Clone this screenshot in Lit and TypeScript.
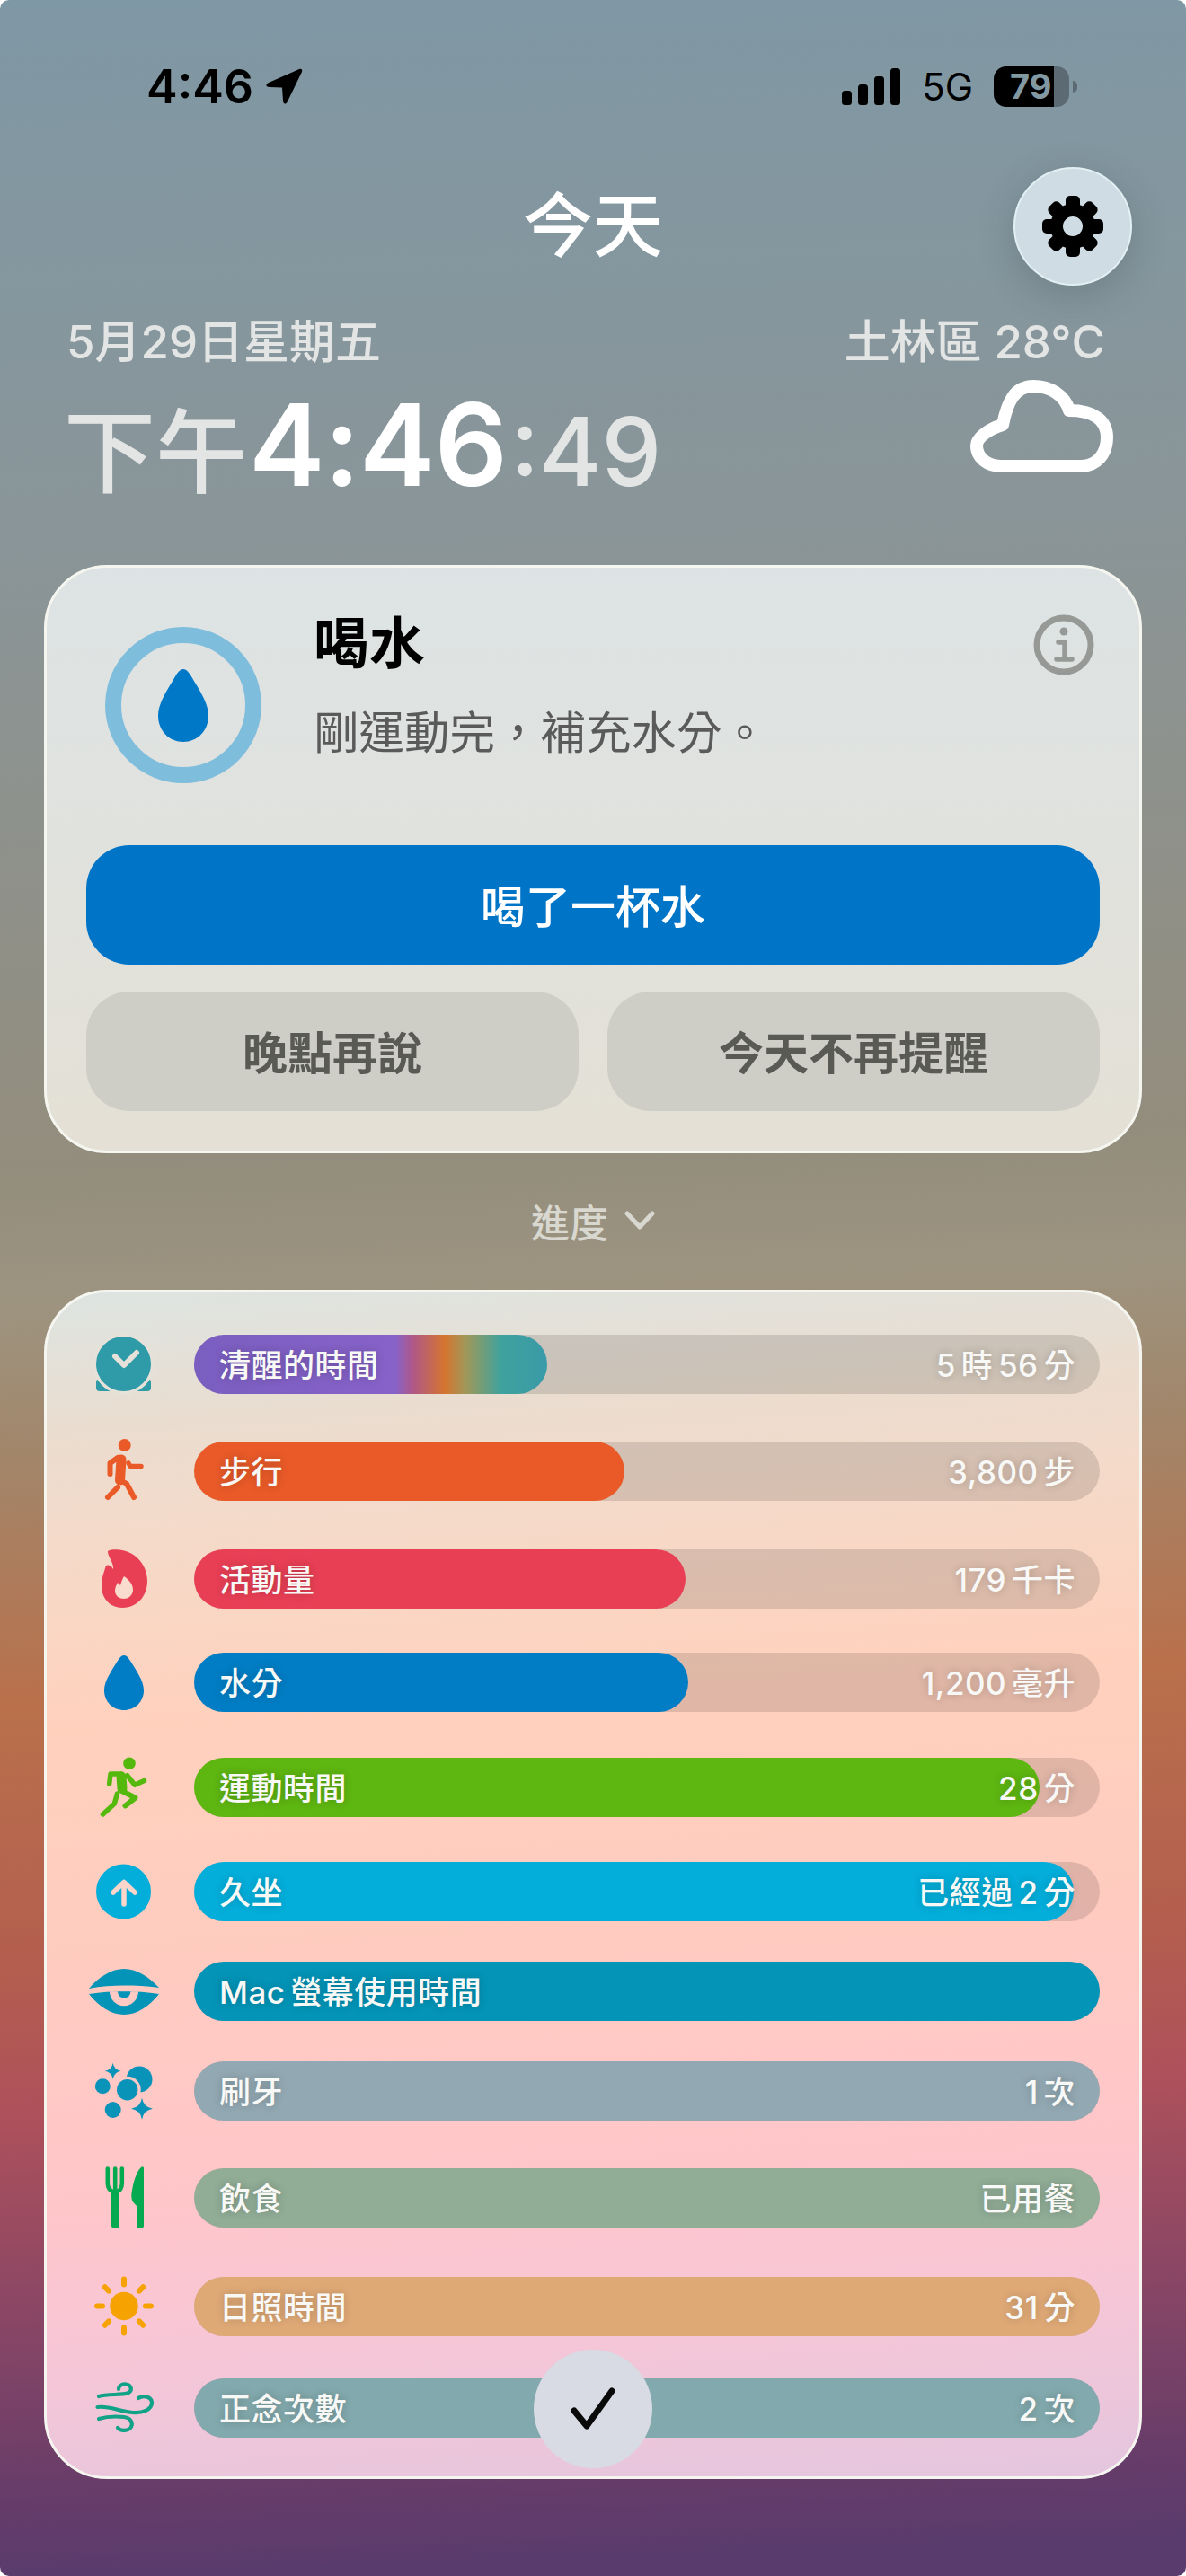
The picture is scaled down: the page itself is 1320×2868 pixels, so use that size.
import { LitElement, css, html, svg } from "lit";
import { customElement } from "lit/decorators.js";

type Row = {
  icon: string;
  label: string;
  value: string;
  color: string;
  fill: number;
  pitch: number;
};

const RAINBOW =
  "linear-gradient(90deg,#7a5ec0 0%,#8762c8 57%,#b05888 62%,#d5752f 71%,#a0985a 77%,#3fa29d 87%,#3a9aa8 100%)";

const ROWS: Row[] = [
  { icon: "wake", label: "清醒的時間", value: "5 時 56 分", color: RAINBOW, fill: 393, pitch: 119 },
  { icon: "walk", label: "步行", value: "3,800 步", color: "#e95a28", fill: 479, pitch: 120 },
  { icon: "flame", label: "活動量", value: "179 千卡", color: "#e83f55", fill: 547, pitch: 115 },
  { icon: "drop", label: "水分", value: "1,200 毫升", color: "#007dc4", fill: 550, pitch: 117 },
  { icon: "run", label: "運動時間", value: "28 分", color: "#5eb611", fill: 941, pitch: 116 },
  { icon: "stand", label: "久坐", value: "已經過 2 分", color: "#03aeda", fill: 979, pitch: 111 },
  { icon: "eye", label: "Mac 螢幕使用時間", value: "", color: "#0394b7", fill: 1008, pitch: 111 },
  { icon: "teeth", label: "刷牙", value: "1 次", color: "#92a8b2", fill: 1008, pitch: 119 },
  { icon: "food", label: "飲食", value: "已用餐", color: "#91ad96", fill: 1008, pitch: 121 },
  { icon: "sun", label: "日照時間", value: "31 分", color: "#dfa976", fill: 1008, pitch: 113 },
  { icon: "wind", label: "正念次數", value: "2 次", color: "#82a9ad", fill: 1008, pitch: 66 },
];

const DROP =
  "M40 10C43 10 45 13 47 16C53 26 62 38 62 49C62 62 52 71 40 71C28 71 18 62 18 49C18 38 27 26 33 16C35 13 37 10 40 10Z";

const sparkle = (x: number, y: number, r: number) => {
  const a = r * 0.14;
  return `M${x} ${y - r}Q${x + a} ${y - a} ${x + r} ${y}Q${x + a} ${y + a} ${x} ${y + r}Q${x - a} ${y + a} ${x - r} ${y}Q${x - a} ${y - a} ${x} ${y - r}Z`;
};

const rays = [0, 45, 90, 135, 180, 225, 270, 315];

const ICONS: Record<string, unknown> = {
  wake: svg`<rect x="9" y="56" width="61" height="14" rx="4" fill="#2f9aa8"/>
    <circle cx="39.5" cy="39.5" r="34" fill="#e6e2d9"/>
    <circle cx="39.5" cy="39.5" r="30.5" fill="#2f9aa8"/>
    <path d="M30 31L40 41L54 27" fill="none" stroke="#e6e2d9" stroke-width="6" stroke-linecap="round" stroke-linejoin="round"/>`,
  walk: svg`<g fill="none" stroke="#e95a28" stroke-linecap="round" stroke-linejoin="round">
    <circle cx="40.7" cy="11" r="7" fill="#e95a28" stroke="none"/>
    <path d="M37 27L35.5 50" stroke-width="11"/>
    <path d="M33 25L24.5 31V43" stroke-width="6"/>
    <path d="M45 31L47 34.5H59" stroke-width="5.5"/>
    <path d="M36 50L43 54L51 69" stroke-width="6"/>
    <path d="M33 58L22 69" stroke-width="6"/></g>`,
  flame: svg`<path d="M22 9C24 7 30 7 35 7.5C52 9 66 24 66 42C66 60 54 72 38 72C24 72 15 61 15 48C15 38 18 32 20 25C22 24 25 24 28 29C29 22 22 16 22 9Z" fill="#e83f55"/>
    <path d="M40 37C46 41 50 46 50 52C50 58 45 62 40 62C34 62 30 58 30 53C30 49 32 46 33 44L36 47C37 44 38 40 40 37Z" fill="#f9dccd"/>`,
  drop: svg`<path d="${DROP}" fill="#007dc4"/>`,
  run: svg`<g fill="none" stroke="#55b80c" stroke-linecap="round" stroke-linejoin="round">
    <circle cx="46" cy="13.3" r="6.8" fill="#55b80c" stroke="none"/>
    <path d="M37 28L38 41" stroke-width="11"/>
    <path d="M37 25H25L23.7 36" stroke-width="5.5"/>
    <path d="M43.7 26.7L52 37.3L62.5 32.5" stroke-width="5.5"/>
    <path d="M36 43L52.5 51.7L41.5 60.5" stroke-width="6"/>
    <path d="M32.5 47L29.3 58.3L16.5 70" stroke-width="5.5"/></g>`,
  stand: svg`<circle cx="39.5" cy="40" r="30.5" fill="#03aeda"/>
    <path d="M40 54V30M28 41L40 29.5L52 41" fill="none" stroke="#fcd5cb" stroke-width="5.5" stroke-linecap="round" stroke-linejoin="round"/>`,
  eye: svg`<g fill="#0394b7"><path d="M1 37C12 24 26 15 40 15C54 15 68 24 79 36C66 34 52 33.5 40 33.5C27 33.5 14 34 1 37Z"/>
    <path d="M1 43C14 41 27 40.3 40 40.3C53 40.3 66 41 79 43C68 57 54 66 40 66C26 66 12 57 1 43Z"/></g>
    <path d="M24 40.2A16 16 0 0 0 56 40.2Z" fill="#ffc9c4"/>
    <path d="M33 40.3A7.2 7.2 0 0 0 47.4 40.3Z" fill="#0394b7"/>`,
  teeth: svg`<g fill="#0a93b9"><path d="${sparkle(27.7, 17.7, 9)}"/>
    <circle cx="57" cy="27" r="14.5"/><circle cx="43.7" cy="38.7" r="15" fill="#ffc8c5"/>
    <circle cx="43.7" cy="38.7" r="11.7"/><circle cx="16.3" cy="34.7" r="8.5"/>
    <circle cx="27.7" cy="61" r="9"/><path d="${sparkle(60, 59.7, 12)}"/></g>`,
  food: svg`<g fill="#04a950"><rect x="26" y="32" width="8.5" height="42" rx="3.5"/>
    <path d="M48.3 37C50 22 55 8 60 5.5C61 5 62 6 62 7.5V71C62 73 60.5 74 58 74C55.5 74 54 73 54 71V49L49.5 44C48.7 42 48.2 39 48.3 37Z"/></g>
    <path d="M21.8 7.5V24Q21.8 32 30.2 34Q37.8 32 37.8 24V7.5M30.2 7.5V32" fill="none" stroke="#04a950" stroke-width="4.6" stroke-linecap="round"/>`,
  sun: svg`<circle cx="40" cy="39.5" r="15.7" fill="#f6a200"/>
    <g stroke="#f6a200" stroke-width="6" stroke-linecap="round">
    ${rays.map((a) => svg`<line x1="40" y1="15.5" x2="40" y2="9.5" transform="rotate(${a} 40 39.5)"/>`)}
    </g>`,
  wind: svg`<g fill="none" stroke="#12a288" stroke-width="4.2" stroke-linecap="round">
    <path d="M12 27C22 24 38 26 45 23C50 20 48 14 42 13.5C37 13 34 16 34 19"/>
    <path d="M10.5 39C24 37 34 44 50 45C60 46 71 42 71 34C71 28 62 25 56 29"/>
    <path d="M12 52C22 49 30 49 40 50C48 51 50 57 48 61C45 66 36 66 33 62"/></g>`,
};

@customElement("app-root")
export class AppRoot extends LitElement {
  static styles = css`
    :host {
      display: block;
      width: 1320px;
      font-family: Inter, "Noto Sans CJK TC", sans-serif;
    }
    .screen {
      position: relative;
      height: 2868px;
      overflow: hidden;
      border-radius: 10px;
      display: flex;
      flex-direction: column;
      background: linear-gradient(
        178deg,
        #7f98a5 0,
        #8a9598 620px,
        #938d7d 1300px,
        #9d9480 1450px,
        #a2866a 1620px,
        #b9704b 1900px,
        #b35d4f 2200px,
        #ae515b 2350px,
        #864566 2600px,
        #663c69 2780px,
        #5a3b6d 2868px
      );
    }
    .status {
      display: flex;
      align-items: center;
      height: 45px;
      margin-top: 74px;
      padding: 0 121px 0 163px;
      color: #000;
    }
    .clock {
      font-size: 52px;
      font-weight: 600;
      line-height: 45px;
    }
    .arrow {
      margin-left: 13px;
    }
    .signal {
      margin-left: auto;
    }
    .net {
      margin-left: 24px;
      font-size: 42px;
      line-height: 45px;
    }
    .battery {
      display: flex;
      align-items: center;
      margin-left: 23px;
    }
    .cell {
      width: 84px;
      height: 45px;
      border-radius: 14px;
      overflow: hidden;
      background: linear-gradient(90deg, #000 80%, #5c6b73 80%);
      color: #8299a4;
      font-size: 38px;
      font-weight: 700;
      line-height: 45px;
      padding-left: 18px;
      box-sizing: border-box;
    }
    .nub {
      width: 5px;
      height: 13px;
      margin-left: 4px;
      border-radius: 0 7px 7px 0;
      background: #5c6b73;
    }
    .head {
      display: grid;
      grid-template-columns: 1fr auto 1fr;
      align-items: center;
      margin-top: 67px;
      padding: 0 60px;
      color: #fff;
    }
    .head h1 {
      margin: 0;
      font-size: 78px;
      font-weight: 500;
      line-height: 90px;
    }
    .gear {
      justify-self: end;
      width: 132px;
      height: 132px;
      box-sizing: border-box;
      border-radius: 50%;
      border: 2px solid #e2f0f4;
      background: #cfdce3;
      box-shadow: 0 10px 40px rgba(40, 50, 55, 0.22);
      display: flex;
      align-items: center;
      justify-content: center;
    }
    .meta {
      display: flex;
      justify-content: space-between;
      margin-top: 36px;
      padding: 0 90px 0 74px;
      font-size: 51px;
      font-weight: 500;
      line-height: 54px;
      color: #e3e5e5;
    }
    .now {
      display: flex;
      justify-content: space-between;
      align-items: flex-start;
      margin-top: 15px;
      padding: 0 79px 0 71px;
    }
    .digital {
      display: flex;
      align-items: baseline;
      height: 145px;
      line-height: 145px;
      color: #e3e5e5;
      font-weight: 500;
    }
    .ampm {
      font-size: 102px;
      margin-right: 2px;
    }
    .hm {
      font-size: 127px;
      font-weight: 600;
      color: #fff;
      letter-spacing: -1px;
    }
    .sec {
      font-size: 106px;
      margin-left: 4px;
    }
    .cloud {
      margin-top: -3px;
    }
    .card {
      margin: 0 49px;
      box-sizing: border-box;
      border: 3px solid #f6f6f1;
      border-radius: 70px;
    }
    .remind {
      height: 655px;
      margin-top: 61px;
      padding: 0 44px;
      background: linear-gradient(180deg, #dde3e4 0%, #e0e2de 45%, #e4e0d5 100%);
    }
    .top {
      display: flex;
      align-items: flex-start;
      height: 309px;
    }
    .ring {
      flex: none;
      width: 174px;
      height: 174px;
      box-sizing: border-box;
      margin: 66px 0 0 21px;
      border: 18px solid #7fbddd;
      border-radius: 50%;
      display: flex;
      align-items: center;
      justify-content: center;
    }
    .copy {
      margin: 50px 0 0 58px;
    }
    .copy h2 {
      margin: 0;
      font-size: 62px;
      font-weight: 700;
      line-height: 70px;
      color: #000;
    }
    .copy p {
      margin: 29px 0 0;
      font-size: 50.500px;
      line-height: 70px;
      color: #5a5a5a;
    }
    .info {
      margin: 52px 6px 0 auto;
    }
    .btn {
      display: flex;
      align-items: center;
      justify-content: center;
      height: 133px;
      box-sizing: border-box;
      padding-bottom: 4px;
      border-radius: 48px;
      font-size: 50px;
      font-weight: 500;
    }
    .primary {
      background: #0075c8;
      color: #fff;
    }
    .pair {
      display: grid;
      grid-template-columns: 1fr 1fr;
      gap: 32px;
      margin-top: 30px;
    }
    .secondary {
      background: #cfcec6;
      color: #5a5a55;
      font-weight: 600;
    }
    .progress {
      display: flex;
      align-items: center;
      justify-content: center;
      gap: 18px;
      height: 152px;
      font-size: 43px;
      font-weight: 500;
      color: #d8d8d0;
      padding-bottom: 3px;
      box-sizing: border-box;
    }
    .goals {
      height: 1324px;
      padding: 47px 44px 0 26px;
      background: linear-gradient(
        176deg,
        #dde4e1 0%,
        #eaddd0 11%,
        #f5dac9 20%,
        #ffd1bd 35%,
        #ffcbc0 54%,
        #ffc6ca 73%,
        #f7c6d6 84%,
        #eec6da 92%,
        #e3c6df 100%
      );
    }
    .row {
      display: flex;
      align-items: flex-start;
    }
    .icon {
      flex: none;
      display: flex;
      justify-content: center;
      align-items: center;
      width: 120px;
      height: 66px;
      margin-right: 18px;
    }
    .bar {
      position: relative;
      flex: 1;
      height: 66px;
      border-radius: 33px;
      background: rgba(0, 0, 0, 0.12);
    }
    .level {
      position: absolute;
      left: 0;
      top: 0;
      bottom: 0;
      border-radius: 33px;
    }
    .text {
      position: relative;
      display: flex;
      justify-content: space-between;
      align-items: center;
      height: 66px;
      box-sizing: border-box;
      padding: 0 27px 3px 28px;
      font-size: 35px;
      font-weight: 500;
      color: #f8f8f6;
      word-spacing: -4px;
      letter-spacing: 0.5px;
      text-shadow: 0 0 10px rgba(0, 0, 0, 0.22);
    }
    .done {
      position: absolute;
      left: 594px;
      bottom: 120px;
      width: 132px;
      height: 132px;
      border-radius: 50%;
      background: #d8dbe3;
      display: flex;
      align-items: center;
      justify-content: center;
    }
  `;

  render() {
    return html`
      <div class="screen">
        <div class="status">
          <span class="clock">4:46</span>
          <svg class="arrow" width="42" height="41" viewBox="0 0 42 41">
            <path
              d="M38 1L4 16C0 18 1 21 5 21L19 21.500L20 36C20 40 23 41 25 37L41 4C42 1 40 0 38 1Z"
            />
          </svg>
          <svg class="signal" width="65" height="41" viewBox="0 0 65 41">
            <rect x="0" y="25" width="11" height="16" rx="3.500" />
            <rect x="18" y="18" width="11" height="23" rx="3.500" />
            <rect x="36" y="9" width="11" height="32" rx="3.500" />
            <rect x="54" y="0" width="11" height="41" rx="3.500" />
          </svg>
          <span class="net">5G</span>
          <div class="battery">
            <div class="cell">79</div>
            <div class="nub"></div>
          </div>
        </div>

        <div class="head">
          <span></span>
          <h1>今天</h1>
          <div class="gear">
            <svg width="70" height="70" viewBox="0 0 70 70">
              ${rays.map(
                (a) =>
                  svg`<rect x="27" y="1" width="16" height="22" rx="5" transform="rotate(${a} 35 35)"/>`
              )}
              <circle cx="35" cy="35" r="18" fill="none" stroke="#000" stroke-width="14" />
            </svg>
          </div>
        </div>

        <div class="meta">
          <span>5月29日星期五</span>
          <span>土林區 28°C</span>
        </div>

        <div class="now">
          <div class="digital">
            <span class="ampm">下午</span>
            <span class="hm">4:46</span>
            <span class="sec">:49</span>
          </div>
          <svg class="cloud" width="162" height="108" viewBox="0 0 162 108">
            <path
              d="M36 99H124C142 99 153 85 153 67C153 49 140 37 111 37C106 20 90 10 71 10C50 10 42 28 37 53C20 58 8 68 8 76C8 90 20 99 36 99Z"
              fill="none"
              stroke="#fff"
              stroke-width="14"
              stroke-linejoin="round"
            />
          </svg>
        </div>

        <section class="card remind">
          <div class="top">
            <div class="ring">
              <svg width="56" height="81" viewBox="18 10 44 61" preserveAspectRatio="none">
                <path d="${DROP}" fill="#0078c8" />
              </svg>
            </div>
            <div class="copy">
              <h2>喝水</h2>
              <p>剛運動完，補充水分。</p>
            </div>
            <svg class="info" width="68" height="68" viewBox="0 0 68 68">
              <circle cx="34" cy="34" r="30" fill="none" stroke="#979997" stroke-width="7" />
              <circle cx="34" cy="19" r="4.500" fill="#979997" />
              <path
                d="M28 31H35V49M26 50H43"
                fill="none"
                stroke="#979997"
                stroke-width="5.500"
                stroke-linecap="round"
                stroke-linejoin="round"
              />
            </svg>
          </div>
          <div class="btn primary">喝了一杯水</div>
          <div class="pair">
            <div class="btn secondary">晚點再說</div>
            <div class="btn secondary">今天不再提醒</div>
          </div>
        </section>

        <div class="progress">
          <span>進度</span>
          <svg width="34" height="22" viewBox="0 0 34 22">
            <path
              d="M3 3L17 18L31 3"
              fill="none"
              stroke="#d8d8d0"
              stroke-width="5"
              stroke-linecap="round"
              stroke-linejoin="round"
            />
          </svg>
        </div>

        <section class="card goals">
          ${ROWS.map(
            (r) => html`
              <div class="row" style="height:${r.pitch}px">
                <div class="icon">
                  <svg width="80" height="80" viewBox="0 0 80 80">${ICONS[r.icon]}</svg>
                </div>
                <div class="bar">
                  <div class="level" style="width:${r.fill}px;background:${r.color}"></div>
                  <div class="text">
                    <span>${r.label}</span>
                    <span>${r.value}</span>
                  </div>
                </div>
              </div>
            `
          )}
        </section>

        <div class="done">
          <svg width="50" height="48" viewBox="0 0 50 48">
            <path
              d="M4 26L18 43L46 4"
              fill="none"
              stroke="#0a0a0a"
              stroke-width="7"
              stroke-linecap="round"
              stroke-linejoin="round"
            />
          </svg>
        </div>
      </div>
    `;
  }
}
